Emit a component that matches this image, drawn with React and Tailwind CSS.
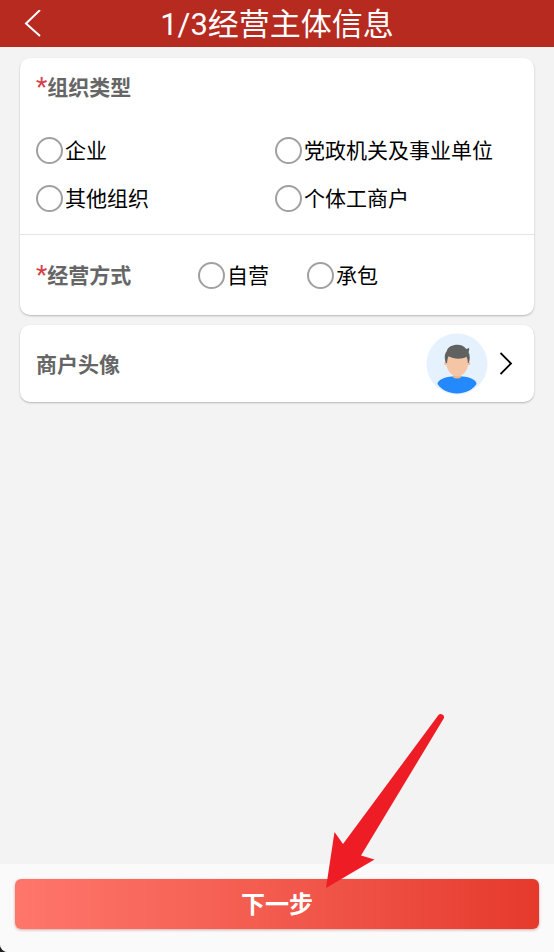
import { useState } from 'react'

const ORG_TYPES = ['企业', '党政机关及事业单位', '其他组织', '个体工商户']
const MODES = ['自营', '承包']

function Radio({ name, label, checked, onChange }) {
    return (
        <label className="flex items-center gap-0.5 text-[21px] leading-[26px] text-black whitespace-nowrap cursor-pointer">
            <input
                type="radio"
                name={name}
                value={label}
                checked={checked}
                onChange={onChange}
                className="appearance-none size-[27px] shrink-0 rounded-full border-2 border-[#a0a0a0] bg-white checked:border-[8px] checked:border-[#b62a20]"
            />
            <span className="pt-0.5">{label}</span>
        </label>
    )
}

function Required() {
    return <span className="text-[26px] leading-none font-normal text-[#d6404a]">*</span>
}

function Avatar() {
    return (
        <svg viewBox="0 0 62 62" className="size-[62px]" aria-hidden="true">
            <circle cx="31" cy="31" r="30.5" fill="#e5f2fe" />
            <path d="M11.500 51c0-4 7-7 14.500-7.500h10.500c7.500 .5 14 3.500 14 7.500-4 6-11.500 9.500-19.500 9.500S15.500 57 11.500 51z" fill="#2389fd" />
            <path d="M27 40h8v4c-1 2-7 2-8 0z" fill="#eab28f" />
            <circle cx="20" cy="30.500" r="1.800" fill="#f0bd9a" />
            <circle cx="42.500" cy="30.500" r="1.800" fill="#f0bd9a" />
            <path d="M20.500 21H42v10c0 6.500-5.500 12.500-10.700 12.500S20.500 37.500 20.500 31z" fill="#f4c6a5" />
            <path d="M19.800 30c-1.500-5-1.500-9 1-12 1-4 5.500-6.200 10.700-6.200 3.800 0 6.500 1.500 8.500 4 1 .3 2-.1 3-1 .3 1.500.2 3-.4 4.200 1.500 3.500 1.500 7.500.2 11l-1-.2c0-2-.3-4-1.400-6-5 3-12.800 2.400-17.800-.5-1 2-1.500 4.200-1.500 6.700z" fill="#606161" />
        </svg>
    )
}

export default function App() {
    const [orgType, setOrgType] = useState('')
    const [mode, setMode] = useState('')

    return (
        <div className="bg-[#222222]">
            <div className="min-h-screen flex flex-col overflow-hidden rounded-bl-lg bg-[#f3f3f3] font-[Roboto,'Noto_Sans_CJK_SC',sans-serif]">
                <header className="grid grid-cols-[1fr_auto_1fr] items-center h-[47px] px-6 bg-[#b62a20] text-white">
                    <button type="button" aria-label="返回" className="justify-self-start">
                        <svg viewBox="0 0 18 28" className="w-[18px] h-7" fill="none" stroke="currentColor" strokeWidth="2">
                            <path d="M16 0L2 13.500L16 26" />
                        </svg>
                    </button>
                    <h1 className="pt-0.5 text-[31px] leading-[45px]">1/3经营主体信息</h1>
                </header>

                <main className="flex-1 flex flex-col gap-2.5 px-5 pt-[11px] pb-5">
                    <section className="rounded-[10px] bg-white shadow-[0_1px_2px_rgba(0,0,0,0.25)]">
                        <fieldset className="pl-4 pr-5 pt-4 pb-[22px]">
                            <legend className="float-left flex w-full h-7 mb-[34px] text-[21px] leading-7 font-bold text-[#666666]">
                                <Required />组织类型
                            </legend>
                            <div className="clear-both grid grid-cols-2 gap-y-5">
                                {ORG_TYPES.map((item) => (
                                    <Radio
                                        key={item}
                                        name="orgType"
                                        label={item}
                                        checked={orgType === item}
                                        onChange={() => setOrgType(item)}
                                    />
                                ))}
                            </div>
                        </fieldset>

                        <div
                            role="radiogroup"
                            aria-labelledby="mode-label"
                            className="flex items-center h-[81px] pl-4 pr-5 border-t border-[#e4e4e4]"
                        >
                            <span id="mode-label" className="flex w-[162px] pt-0.5 text-[21px] leading-7 font-bold text-[#666666]">
                                <Required />经营方式
                            </span>
                            <div className="flex gap-[38px]">
                                {MODES.map((item) => (
                                    <Radio
                                        key={item}
                                        name="mode"
                                        label={item}
                                        checked={mode === item}
                                        onChange={() => setMode(item)}
                                    />
                                ))}
                            </div>
                        </div>
                    </section>

                    <button
                        type="button"
                        className="flex items-center h-[77px] pl-4 pr-5 rounded-[10px] bg-white text-left shadow-[0_1px_2px_rgba(0,0,0,0.25)]"
                    >
                        <span className="flex-1 pt-0.5 text-[21px] leading-7 font-bold text-[#666666]">商户头像</span>
                        <Avatar />
                        <svg viewBox="0 0 14 24" className="ml-3 w-3.5 h-6" fill="none" stroke="#000" strokeWidth="1.8">
                            <path d="M0.500 1L11 11.500L0.500 22" />
                        </svg>
                    </button>
                </main>

                <footer className="relative px-[15px] pt-[15px] pb-[23px] bg-[#fafafa]">
                    <button
                        type="button"
                        className="w-full h-[50px] pt-0.5 rounded-md bg-linear-to-r from-[#ff766b] to-[#e5392c] text-white text-2xl font-bold shadow-[0_1px_3px_rgba(160,50,40,0.4)]"
                    >
                        下一步
                    </button>
                    {/* pointer to the next step */}
                    <svg
                        viewBox="0 0 118 175"
                        className="absolute left-1/2 bottom-16 ml-[49px] w-[118px] h-[175px] pointer-events-none"
                        aria-hidden="true"
                    >
                        <path d="M0 175L8.500 119L17 131L112.300 2.200A3.200 3.200 0 0 1 117.700 5.500L35 142.500L48.500 146.500z" fill="#ee1c25" />
                    </svg>
                </footer>
            </div>
        </div>
    )
}
